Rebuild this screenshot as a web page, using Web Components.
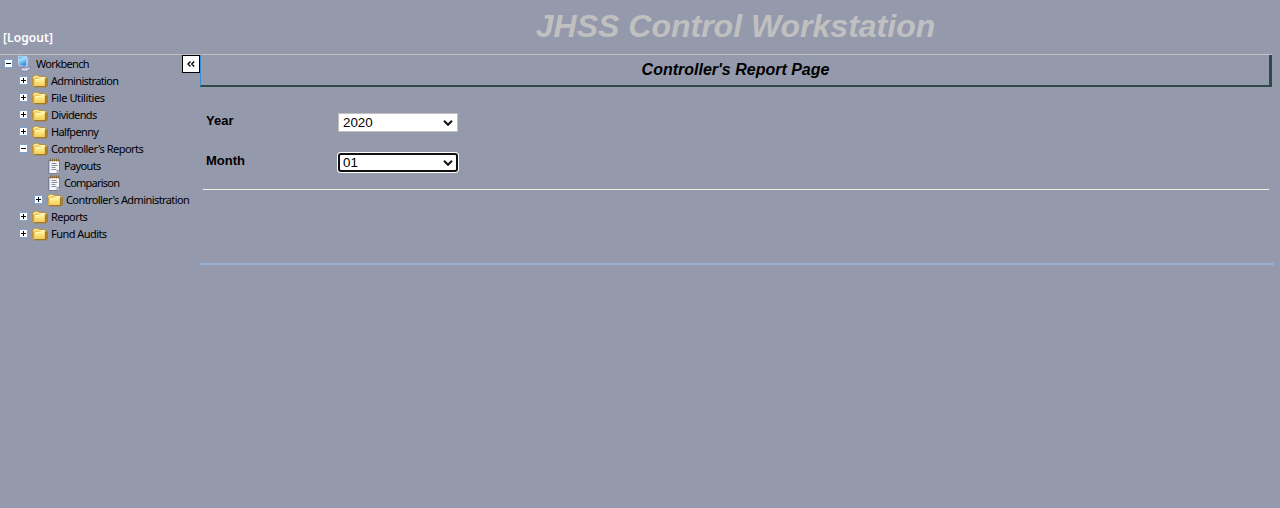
<!DOCTYPE html>
<html lang="en">
<head>
<meta charset="utf-8">
<title>JHSS Control Workstation</title>
<style>
body{margin:0;background:#9599ac;font-family:"Liberation Sans",Arial,sans-serif;color:#000;height:508px;overflow:hidden}
</style>
</head>
<body>
<work-station></work-station>
<script>
const define = (name, html, setup) => {
  const t = document.createElement('template');
  t.innerHTML = html;
  customElements.define(name, class extends HTMLElement {
    connectedCallback() {
      if (this.shadowRoot) return;
      this.attachShadow({mode: 'open'}).append(t.content.cloneNode(true));
      if (setup) setup(this, this.shadowRoot);
    }
  });
};

/* Text spread by letter spacing to a given width */
define('fit-text', `<style>:host{display:inline-block;white-space:nowrap}span{display:inline-block}</style><span><slot></slot></span>`,
  (el, root) => {
    const s = root.querySelector('span'), w = +el.getAttribute('w');
    if (w) s.style.letterSpacing = (w - s.getBoundingClientRect().width) / el.textContent.length + 'px';
  });

const icons = {
  folder: `<svg width="16" height="14" viewBox="0 0 16 14"><defs><linearGradient id="f" x2="0" y2="1"><stop stop-color="#fff8a0"/><stop offset="1" stop-color="#f3cd58"/></linearGradient></defs>
    <path d="M.6 11V3.2L2.4 1.4h3.8l1.3 1.2h5.6l1.5 1.6V12l-.8.8H2.4z" fill="#f0cf68" stroke="#b58a30" stroke-width=".9"/>
    <path d="M1.6 4 2.8 2.3h3L7 3.5h6" fill="none" stroke="#fff3a8"/>
    <path d="M1.5 5v6" stroke="#c99a3c" stroke-width=".8"/>
    <path d="M3 5.5h5L9.5 4.4h3.2V11.8H3z" fill="url(#f)"/><path d="M3 5.6h5L9.5 4.4h3.2" fill="none" stroke="#fffcd6" stroke-width=".8"/>
    <path d="M13.4 4.5v7.8M2.4 12.7h11.4l1.4-1V4.4" stroke="#9a6e20" fill="none"/></svg>`,
  page: `<svg width="12" height="16" viewBox="0 0 12 16"><path d="M1 2h10v13H1z" fill="#f8f8fb"/><path d="M.5 2v13.5H9L11.5 13V2" fill="none" stroke="#77809c"/><path d="M1.5 3v11.5" stroke="#b8c4e0"/>
    <path d="M1 2.5h10" stroke="#a57b35"/><path d="M2.5.5v3M4.5.5v3M6.5.5v3M8.5.5v3M10.5.5v3" stroke="#80602e" stroke-width=".8"/><path d="M3.5 5.5h5M3.5 7.5h6M3.5 9.5h4M3.5 11.5h5" stroke="#888b9b"/><path d="M9 15v-2.5h2.5" fill="#d9dce8" stroke="#777d94" stroke-width=".7"/></svg>`,
  computer: `<svg width="14" height="17" viewBox="0 0 14 17"><defs><linearGradient id="c" x2=".4" y2="1"><stop stop-color="#3fa4ee"/><stop offset=".4" stop-color="#9fe0ff"/><stop offset="1" stop-color="#2b86e0"/></linearGradient></defs>
    <path d="M9.8 2 11.6 3l-.8 9.2-2.2 1z" fill="#c3c8e8" stroke="#8990bb" stroke-width=".6"/>
    <path d="M1.2 1.2 10 1.8 9.3 11.4 2 10.4z" fill="url(#c)" stroke="#b9d6f4" stroke-width=".9"/>
    <path d="M4.6 11.2l4 .6v1.8H5z" fill="#7b86bd"/>
    <path d="M3.4 14.2 5.4 12.8h4.8l2.6-1 .4 2.2-3.4 2H5.6z" fill="#d6daf0" stroke="#737aa8" stroke-width=".7"/></svg>`
};

define('tree-row', `<style>
:host{display:flex;height:17px;align-items:center;box-sizing:border-box;font:11px/17px "Noto Sans","Open Sans",sans-serif}
.box{box-sizing:border-box;width:7px;height:7px;margin-right:5px;background:#fff;box-shadow:0 0 0 .8px #78a8dc;flex:none;display:flex}
.box svg,.icon svg{display:block}
.icon{flex:none;display:flex;justify-content:center}
.text{height:17px;line-height:17px}
</style><span class="box"></span><span class="icon"></span><span class="text"><slot></slot></span>`,
  (el, root) => {
    const kind = el.getAttribute('kind'), state = el.getAttribute('state');
    el.style.paddingLeft = el.getAttribute('indent') + 'px';
    const box = root.querySelector('.box');
    if (state) box.innerHTML = `<svg width="7" height="7" viewBox="0 0 7 7"><path d="M1 3.5h5${state === 'plus' ? 'M3.5 1v5' : ''}" stroke="#000"/></svg>`;
    else box.remove();
    const icon = root.querySelector('.icon');
    icon.innerHTML = icons[kind];
    icon.style.marginRight = {folder: 3, page: 4, computer: 5}[kind] + 'px';
  });

define('side-tree', `<style>
:host{display:block;width:200px;height:190px;position:relative}
button{position:absolute;top:0;right:0;width:18px;height:18px;box-sizing:border-box;border:1px solid #000;background:#fff;padding:0;display:flex;align-items:center;justify-content:center}
</style>
<tree-row indent="5" kind="computer" state="minus"><fit-text w="53">Workbench</fit-text></tree-row>
<tree-row indent="20" kind="folder" state="plus"><fit-text w="67.3">Administration</fit-text></tree-row>
<tree-row indent="20" kind="folder" state="plus"><fit-text w="53.7">File Utilities</fit-text></tree-row>
<tree-row indent="20" kind="folder" state="plus"><fit-text w="45.7">Dividends</fit-text></tree-row>
<tree-row indent="20" kind="folder" state="plus"><fit-text w="47.3">Halfpenny</fit-text></tree-row>
<tree-row indent="20" kind="folder" state="minus"><fit-text w="92.3">Controller's Reports</fit-text></tree-row>
<tree-row indent="48" kind="page"><fit-text w="36.7">Payouts</fit-text></tree-row>
<tree-row indent="48" kind="page"><fit-text w="55.3">Comparison</fit-text></tree-row>
<tree-row indent="35" kind="folder" state="plus"><fit-text w="123.3">Controller's Administration</fit-text></tree-row>
<tree-row indent="20" kind="folder" state="plus"><fit-text w="36.3">Reports</fit-text></tree-row>
<tree-row indent="20" kind="folder" state="plus"><fit-text w="55.6">Fund Audits</fit-text></tree-row>
<button aria-label="Collapse"><svg width="8" height="6" viewBox="0 0 8 6"><path d="M3.5.5 1 3l2.5 2.5M7.2.5 4.7 3l2.5 2.5" fill="none" stroke="#000" stroke-width="1.4"/></svg></button>`);

define('page-header', `<style>
:host{display:grid;grid-template-columns:200px 1fr;width:1272px;height:55px;box-sizing:border-box;border-bottom:1px solid #c0c0c0}
a{align-self:end;padding:0 0 8px 3px;font:600 12px/17px "Noto Sans","Open Sans",sans-serif;color:#fff}
h1{margin:0;padding:8px 1px 0 0;text-align:center;font:italic bold 32px/36px "Liberation Sans",Arial,sans-serif;color:#c0c0c0}
</style><a><fit-text w="50">[Logout]</fit-text></a><h1>JHSS Control Workstation</h1>`);

define('select-field', `<style>
:host{display:grid;grid-template-columns:132px 120px;height:40px;align-items:start;font:bold 13px/15px "Liberation Sans",Arial,sans-serif}
.select{box-sizing:border-box;height:19px;border:1px solid #c0c0c0;background:#fff;display:flex;align-items:center;justify-content:space-between;padding:0 4px;font:13.33px/17px "Liberation Sans",Arial,sans-serif}
:host([focused]) .select{border:2px solid #101010;border-radius:3px;padding:0 3px;box-shadow:0 0 0 1px #fff}
</style><label><slot></slot></label><div class="select" role="combobox"><span></span><svg width="10" height="6" viewBox="0 0 10 6"><path d="M1 .8l4 4 4-4" fill="none" stroke="#111" stroke-width="2"/></svg></div>`,
  (el, root) => { root.querySelector('.select span').textContent = el.getAttribute('value'); });

define('report-page', `<style>
:host{display:block;width:1074px;height:210px;box-sizing:border-box;border-bottom:2px solid #94afd4}
h2{margin:0;width:1072px;height:32px;box-sizing:border-box;border:solid #2f4848;border-width:0 3px 2px 1px;border-left-color:#3b8fd0;padding-left:1px;text-align:center;font:italic bold 16px/29px "Liberation Sans",Arial,sans-serif}
form{padding:26px 0 0 6px;height:101px;box-sizing:border-box}
hr{margin:0 5px 0 3px;border:0;height:2px;box-sizing:border-box;border-top:1px solid #9a9a9a;border-bottom:1px solid #eee}
</style><h2>Controller's Report Page</h2>
<form><select-field value="2020">Year</select-field><select-field value="01" focused>Month</select-field></form><hr>`);

define('work-station', `<style>:host{display:block}main{display:flex;align-items:flex-start}</style>
<page-header></page-header><main><side-tree></side-tree><report-page></report-page></main>`);
</script>
</body>
</html>
